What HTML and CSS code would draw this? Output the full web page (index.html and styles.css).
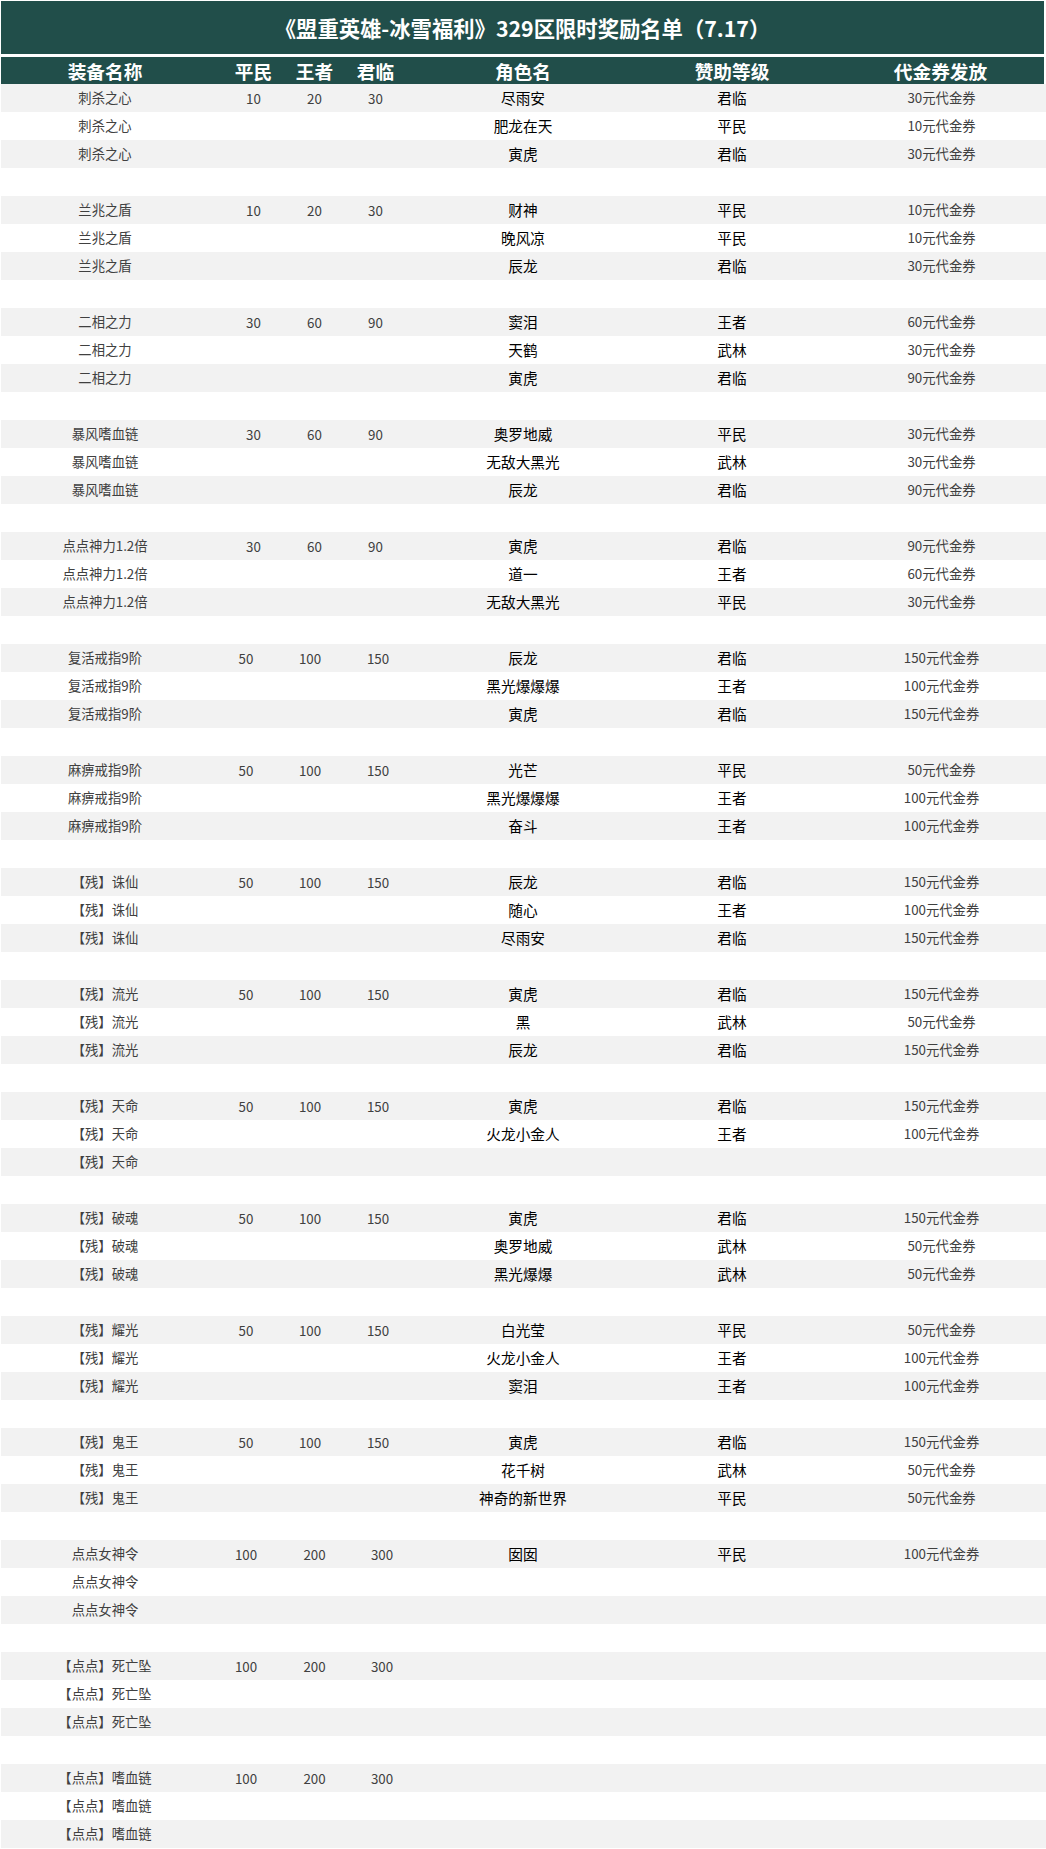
FILE: index.html
```html
<!DOCTYPE html>
<html lang="zh-CN">
<head>
<meta charset="utf-8">
<title>329区限时奖励名单</title>
<link rel="stylesheet" href="styles.css">
</head>
<body>
<div class="sheet">
  <div class="title">《盟重英雄-冰雪福利》329区限时奖励名单（7.17）</div>
  <div class="row head">
    <div class="c">装备名称</div>
    <div class="nums"><span>平民</span><span>王者</span><span>君临</span></div>
    <div class="c">角色名</div>
    <div class="c">赞助等级</div>
    <div class="c">代金券发放</div>
  </div>
  <div class="body">
    <div class="row"><div class="c item">刺杀之心</div><div class="nums"><span>10</span><span>20</span><span>30</span></div><div class="c role">尽雨安</div><div class="c lvl">君临</div><div class="c cash">30元代金券</div></div>
    <div class="row"><div class="c item">刺杀之心</div><div class="nums"></div><div class="c role">肥龙在天</div><div class="c lvl">平民</div><div class="c cash">10元代金券</div></div>
    <div class="row"><div class="c item">刺杀之心</div><div class="nums"></div><div class="c role">寅虎</div><div class="c lvl">君临</div><div class="c cash">30元代金券</div></div>
    <div class="row blank"></div>

    <div class="row"><div class="c item">兰兆之盾</div><div class="nums"><span>10</span><span>20</span><span>30</span></div><div class="c role">财神</div><div class="c lvl">平民</div><div class="c cash">10元代金券</div></div>
    <div class="row"><div class="c item">兰兆之盾</div><div class="nums"></div><div class="c role">晚风凉</div><div class="c lvl">平民</div><div class="c cash">10元代金券</div></div>
    <div class="row"><div class="c item">兰兆之盾</div><div class="nums"></div><div class="c role">辰龙</div><div class="c lvl">君临</div><div class="c cash">30元代金券</div></div>
    <div class="row blank"></div>

    <div class="row"><div class="c item">二相之力</div><div class="nums"><span>30</span><span>60</span><span>90</span></div><div class="c role">窦泪</div><div class="c lvl">王者</div><div class="c cash">60元代金券</div></div>
    <div class="row"><div class="c item">二相之力</div><div class="nums"></div><div class="c role">天鹤</div><div class="c lvl">武林</div><div class="c cash">30元代金券</div></div>
    <div class="row"><div class="c item">二相之力</div><div class="nums"></div><div class="c role">寅虎</div><div class="c lvl">君临</div><div class="c cash">90元代金券</div></div>
    <div class="row blank"></div>

    <div class="row"><div class="c item">暴风嗜血链</div><div class="nums"><span>30</span><span>60</span><span>90</span></div><div class="c role">奥罗地威</div><div class="c lvl">平民</div><div class="c cash">30元代金券</div></div>
    <div class="row"><div class="c item">暴风嗜血链</div><div class="nums"></div><div class="c role">无敌大黑光</div><div class="c lvl">武林</div><div class="c cash">30元代金券</div></div>
    <div class="row"><div class="c item">暴风嗜血链</div><div class="nums"></div><div class="c role">辰龙</div><div class="c lvl">君临</div><div class="c cash">90元代金券</div></div>
    <div class="row blank"></div>

    <div class="row"><div class="c item">点点神力1.2倍</div><div class="nums"><span>30</span><span>60</span><span>90</span></div><div class="c role">寅虎</div><div class="c lvl">君临</div><div class="c cash">90元代金券</div></div>
    <div class="row"><div class="c item">点点神力1.2倍</div><div class="nums"></div><div class="c role">道一</div><div class="c lvl">王者</div><div class="c cash">60元代金券</div></div>
    <div class="row"><div class="c item">点点神力1.2倍</div><div class="nums"></div><div class="c role">无敌大黑光</div><div class="c lvl">平民</div><div class="c cash">30元代金券</div></div>
    <div class="row blank"></div>

    <div class="row t50"><div class="c item">复活戒指9阶</div><div class="nums"><span>50</span><span>100</span><span>150</span></div><div class="c role">辰龙</div><div class="c lvl">君临</div><div class="c cash">150元代金券</div></div>
    <div class="row"><div class="c item">复活戒指9阶</div><div class="nums"></div><div class="c role">黑光爆爆爆</div><div class="c lvl">王者</div><div class="c cash">100元代金券</div></div>
    <div class="row"><div class="c item">复活戒指9阶</div><div class="nums"></div><div class="c role">寅虎</div><div class="c lvl">君临</div><div class="c cash">150元代金券</div></div>
    <div class="row blank"></div>

    <div class="row t50"><div class="c item">麻痹戒指9阶</div><div class="nums"><span>50</span><span>100</span><span>150</span></div><div class="c role">光芒</div><div class="c lvl">平民</div><div class="c cash">50元代金券</div></div>
    <div class="row"><div class="c item">麻痹戒指9阶</div><div class="nums"></div><div class="c role">黑光爆爆爆</div><div class="c lvl">王者</div><div class="c cash">100元代金券</div></div>
    <div class="row"><div class="c item">麻痹戒指9阶</div><div class="nums"></div><div class="c role">奋斗</div><div class="c lvl">王者</div><div class="c cash">100元代金券</div></div>
    <div class="row blank"></div>

    <div class="row t50"><div class="c item">【残】诛仙</div><div class="nums"><span>50</span><span>100</span><span>150</span></div><div class="c role">辰龙</div><div class="c lvl">君临</div><div class="c cash">150元代金券</div></div>
    <div class="row"><div class="c item">【残】诛仙</div><div class="nums"></div><div class="c role">随心</div><div class="c lvl">王者</div><div class="c cash">100元代金券</div></div>
    <div class="row"><div class="c item">【残】诛仙</div><div class="nums"></div><div class="c role">尽雨安</div><div class="c lvl">君临</div><div class="c cash">150元代金券</div></div>
    <div class="row blank"></div>

    <div class="row t50"><div class="c item">【残】流光</div><div class="nums"><span>50</span><span>100</span><span>150</span></div><div class="c role">寅虎</div><div class="c lvl">君临</div><div class="c cash">150元代金券</div></div>
    <div class="row"><div class="c item">【残】流光</div><div class="nums"></div><div class="c role">黑</div><div class="c lvl">武林</div><div class="c cash">50元代金券</div></div>
    <div class="row"><div class="c item">【残】流光</div><div class="nums"></div><div class="c role">辰龙</div><div class="c lvl">君临</div><div class="c cash">150元代金券</div></div>
    <div class="row blank"></div>

    <div class="row t50"><div class="c item">【残】天命</div><div class="nums"><span>50</span><span>100</span><span>150</span></div><div class="c role">寅虎</div><div class="c lvl">君临</div><div class="c cash">150元代金券</div></div>
    <div class="row"><div class="c item">【残】天命</div><div class="nums"></div><div class="c role">火龙小金人</div><div class="c lvl">王者</div><div class="c cash">100元代金券</div></div>
    <div class="row"><div class="c item">【残】天命</div><div class="nums"></div><div class="c role"></div><div class="c lvl"></div><div class="c cash"></div></div>
    <div class="row blank"></div>

    <div class="row t50"><div class="c item">【残】破魂</div><div class="nums"><span>50</span><span>100</span><span>150</span></div><div class="c role">寅虎</div><div class="c lvl">君临</div><div class="c cash">150元代金券</div></div>
    <div class="row"><div class="c item">【残】破魂</div><div class="nums"></div><div class="c role">奥罗地威</div><div class="c lvl">武林</div><div class="c cash">50元代金券</div></div>
    <div class="row"><div class="c item">【残】破魂</div><div class="nums"></div><div class="c role">黑光爆爆</div><div class="c lvl">武林</div><div class="c cash">50元代金券</div></div>
    <div class="row blank"></div>

    <div class="row t50"><div class="c item">【残】耀光</div><div class="nums"><span>50</span><span>100</span><span>150</span></div><div class="c role">白光莹</div><div class="c lvl">平民</div><div class="c cash">50元代金券</div></div>
    <div class="row"><div class="c item">【残】耀光</div><div class="nums"></div><div class="c role">火龙小金人</div><div class="c lvl">王者</div><div class="c cash">100元代金券</div></div>
    <div class="row"><div class="c item">【残】耀光</div><div class="nums"></div><div class="c role">窦泪</div><div class="c lvl">王者</div><div class="c cash">100元代金券</div></div>
    <div class="row blank"></div>

    <div class="row t50"><div class="c item">【残】鬼王</div><div class="nums"><span>50</span><span>100</span><span>150</span></div><div class="c role">寅虎</div><div class="c lvl">君临</div><div class="c cash">150元代金券</div></div>
    <div class="row"><div class="c item">【残】鬼王</div><div class="nums"></div><div class="c role">花千树</div><div class="c lvl">武林</div><div class="c cash">50元代金券</div></div>
    <div class="row"><div class="c item">【残】鬼王</div><div class="nums"></div><div class="c role">神奇的新世界</div><div class="c lvl">平民</div><div class="c cash">50元代金券</div></div>
    <div class="row blank"></div>

    <div class="row t100"><div class="c item">点点女神令</div><div class="nums"><span>100</span><span>200</span><span>300</span></div><div class="c role">囡囡</div><div class="c lvl">平民</div><div class="c cash">100元代金券</div></div>
    <div class="row"><div class="c item">点点女神令</div><div class="nums"></div><div class="c role"></div><div class="c lvl"></div><div class="c cash"></div></div>
    <div class="row"><div class="c item">点点女神令</div><div class="nums"></div><div class="c role"></div><div class="c lvl"></div><div class="c cash"></div></div>
    <div class="row blank"></div>

    <div class="row t100"><div class="c item">【点点】死亡坠</div><div class="nums"><span>100</span><span>200</span><span>300</span></div><div class="c role"></div><div class="c lvl"></div><div class="c cash"></div></div>
    <div class="row"><div class="c item">【点点】死亡坠</div><div class="nums"></div><div class="c role"></div><div class="c lvl"></div><div class="c cash"></div></div>
    <div class="row"><div class="c item">【点点】死亡坠</div><div class="nums"></div><div class="c role"></div><div class="c lvl"></div><div class="c cash"></div></div>
    <div class="row blank"></div>

    <div class="row t100"><div class="c item">【点点】嗜血链</div><div class="nums"><span>100</span><span>200</span><span>300</span></div><div class="c role"></div><div class="c lvl"></div><div class="c cash"></div></div>
    <div class="row"><div class="c item">【点点】嗜血链</div><div class="nums"></div><div class="c role"></div><div class="c lvl"></div><div class="c cash"></div></div>
    <div class="row"><div class="c item">【点点】嗜血链</div><div class="nums"></div><div class="c role"></div><div class="c lvl"></div><div class="c cash"></div></div>
  </div>
</div>
</body>
</html>
```

FILE: styles.css
```css
* {
  box-sizing: border-box;
}

html, body {
  margin: 0;
  background: #ffffff;
}

body {
  padding: 1px 0 0 1px;
  font-family: "Noto Sans CJK SC", "Microsoft YaHei", sans-serif;
  color: #404040;
}

.sheet {
  width: 1045px;
}

.title {
  width: 1043px;
  height: 53px;
  background: #214e4a;
  color: #ffffff;
  font-weight: 700;
  font-size: 21.33px;
  display: flex;
  align-items: center;
  justify-content: center;
  white-space: nowrap;
}

.row {
  display: grid;
  grid-template-columns: 208px 210px 208px 210px 209px;
  height: 28px;
  align-items: center;
  white-space: nowrap;
}

.head {
  margin-top: 3px;
  width: 1043px;
  height: 27px;
  grid-template-columns: 208px 210px 208px 210px 207px;
  background: #214e4a;
  color: #ffffff;
  font-weight: 700;
  font-size: 18.67px;
}

.c {
  text-align: center;
  line-height: 28px;
}

.head .c {
  line-height: 27px;
}

.nums {
  display: flex;
  padding-left: 14px;
  height: 100%;
  align-items: center;
}

.nums span {
  width: 61px;
  text-align: center;
}

.body .row .nums {
  font-size: 13.33px;
  color: #404040;
}

.body .row:nth-child(odd) {
  background: #f2f2f2;
}

.item {
  font-size: 13.33px;
  color: #404040;
}

.role,
.lvl {
  font-size: 14.67px;
  color: #000000;
}

.cash {
  font-size: 13.33px;
  color: #404040;
}

.t50 .nums span:nth-child(1) {
  padding-right: 15px;
}

.t50 .nums span:nth-child(2) {
  padding-right: 9px;
}

.t50 .nums span:nth-child(3) {
  padding-left: 5px;
}

.t100 .nums span:nth-child(1) {
  padding-right: 15px;
}

.t100 .nums span:nth-child(3) {
  padding-left: 13px;
}
```
